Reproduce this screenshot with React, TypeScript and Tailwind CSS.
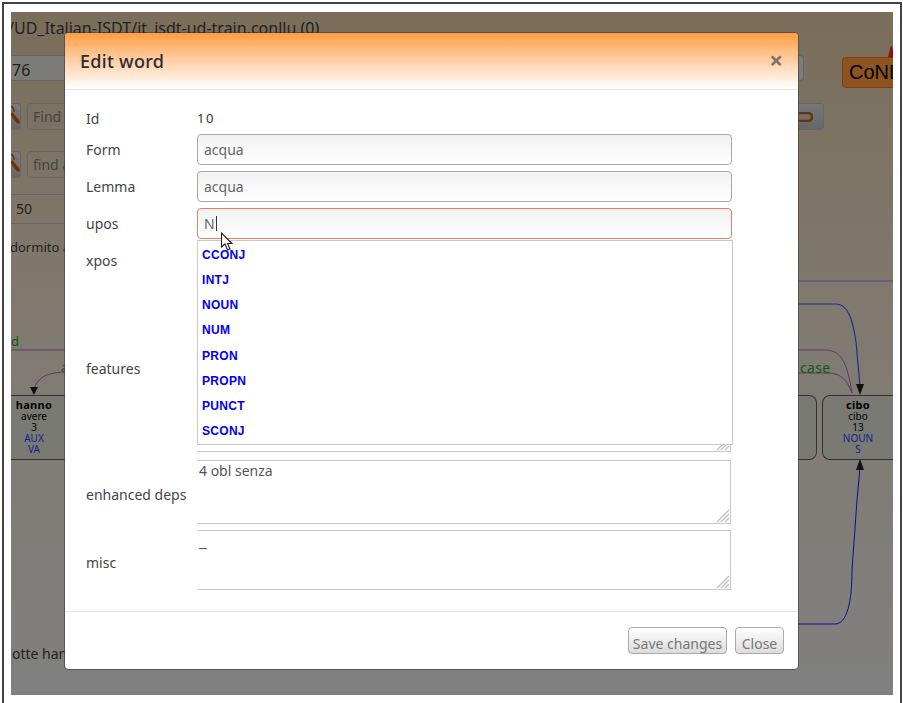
const labelClass = "text-[14px] leading-5 text-[#444]";
const inputClass =
  "h-[31px] w-[535px] rounded-[4px] border border-[#a8a8a8] bg-gradient-to-b from-[#f2f2f2] to-white px-[6px] text-[14px] leading-[29px] text-[#666]";
const textareaClass = "w-[534px] border border-[#c8c8c8] border-l-white px-[1px] text-[14px] leading-5 text-[#555]";

const uposOptions = ["CCONJ", "INTJ", "NOUN", "NUM", "PRON", "PROPN", "PUNCT", "SCONJ"];

const Resizer = () => (
  <svg className="absolute bottom-0 right-0" width="14" height="14" viewBox="0 0 14 14">
    <path d="M1 13 13 1M5 13 13 5M9 13 13 9" stroke="#bdbdbd" strokeWidth="1.2" fill="none" />
  </svg>
);

const SearchIcon = () => (
  <svg width="10" height="25" viewBox="0 0 10 25" className="shrink-0">
    <path d="M0 9 8 19" stroke="#6b3208" strokeWidth="3.5" />
    <path d="M0 2A6 6 0 0 1 3 8" stroke="#6b3208" strokeWidth="1.5" fill="none" />
  </svg>
);

const Node = ({ word, lemma, id, upos, xpos, className }: { word: string; lemma: string; id: string; upos: string; xpos: string; className: string }) => (
  <div className={`absolute flex flex-col items-center border-y border-[#333] bg-[#7a7a74] pt-[3px] text-[10px] leading-[11px] text-black ${className}`}>
    <b className="text-[11px] leading-[12px] tracking-[0.3px]">{word}</b>
    <span>{lemma}</span>
    <span>{id}</span>
    <span className="text-[#1a1a8c]">{upos}</span>
    <span className="text-[#1a1a8c]">{xpos}</span>
  </div>
);

// page behind the dialog, dimmed by the backdrop
const Background = () => (
  <div className="relative h-[683px] w-[882px] overflow-hidden bg-gradient-to-b from-[#7a6e5a] via-[#807b72] to-[#808080] text-[14px] text-[#222]">
    <div className="h-[32px] pt-[6px] text-[16px] leading-5 -ml-[3px] whitespace-nowrap">/UD_Italian-ISDT/it_isdt-ud-train.conllu (0)</div>
    <div className="mt-[11px] flex items-start">
      <div className="h-[26px] w-[793px] shrink-0 rounded-r-[4px] border border-[#666] border-l-0 bg-[#7c7b78] pl-[1px] text-[16px] leading-[29px]">76</div>
      <div className="ml-[38px] mt-[2px] h-[31px] w-[60px] shrink-0 overflow-hidden whitespace-nowrap rounded-l-[4px] border border-[#8a3a10] bg-[#8c5420] pl-[6px] [font-family:'Liberation_Sans',sans-serif] text-[20px] leading-[29px] text-black">
        CoNLL
      </div>
    </div>
    <div className="mt-[15px] flex h-[27px] items-center">
      <div className="flex h-full w-[10px] items-center overflow-hidden rounded-r-[4px] border border-[#666] border-l-0 bg-gradient-to-b from-[#7c7b78] to-[#666]"><SearchIcon /></div>
      <div className="ml-[6px] h-full w-[120px] overflow-hidden whitespace-nowrap rounded-[4px] border border-[#666] pl-[5px] leading-[25px] text-[#444]">Find l</div>
      <div className="ml-[637px] flex h-full w-[40px] items-center justify-end rounded-r-[4px] border border-[#666] border-l-0 bg-gradient-to-b from-[#777] to-[#666] pr-[10px]">
        <svg width="14" height="10" viewBox="0 0 14 10"><path d="M0 1h9a4 4 0 0 1 0 8H0" stroke="#6b3208" strokeWidth="2.5" fill="none" /></svg>
      </div>
    </div>
    <div className="mt-[21px] flex h-[27px] items-center">
      <div className="flex h-full w-[10px] items-center overflow-hidden rounded-r-[4px] border border-[#666] border-l-0 bg-gradient-to-b from-[#7c7b78] to-[#666]"><SearchIcon /></div>
      <div className="ml-[6px] h-full w-[120px] overflow-hidden whitespace-nowrap rounded-[4px] border border-[#666] pl-[5px] leading-[25px] text-[#444]">find a</div>
    </div>
    <div className="mt-[16px] h-[30px] w-[60px] border border-[#666] border-l-0 pl-[5px] leading-[28px]">50</div>
    <div className="mt-[13px] -ml-[1px] whitespace-nowrap text-[13px] leading-5">dormito a</div>

    {/* dependency graph */}
    <svg className="absolute left-0 top-0" width="882" height="683" viewBox="0 0 882 683" fill="none">
      <path d="M700 269H882" stroke="#3a3a8a" strokeWidth="0.8" />
      <path d="M0 338H60" stroke="#5c3a6c" strokeWidth="1.2" />
      <path d="M60 360C40 360 26 362 22 381" stroke="#5c3a6c" strokeWidth="1" />
      <path d="M787 292H825C838 292 842 310 845 330L849 374" stroke="#2a2a90" strokeWidth="1.2" />
      <path d="M787 338H814C830 338 836 350 841 381" stroke="#5c3a6c" strokeWidth="1" />
      <path d="M787 361H816C830 361 836 368 841 381" stroke="#5c3a6c" strokeWidth="1" />
      <path d="M787 612H824C836 612 841 590 841 558L846 488L849 456" stroke="#10108a" strokeWidth="1" />
      <path d="M23 383 19 375H27Z" fill="#111" />
      <path d="M849 383 845 372H853Z" fill="#111" />
      <path d="M849 447 845 458H853Z" fill="#111" />
      <path d="M877 45 880 33 882 38V46Z" fill="#8c1212" />
    </svg>
    <span className="absolute left-0 top-[320px] text-[13px] text-[#0d5a0d]">d</span>
    <span className="absolute left-[50px] top-[346px] text-[13px] text-[#0d5a0d]">a</span>
    <span className="absolute left-[789px] top-[345px] text-[14px] tracking-wide text-[#0d5a0d]">case</span>
    <Node word="hanno" lemma="avere" id="3" upos="AUX" xpos="VA" className="left-0 top-[383px] h-[65px] w-[54px] pr-[8px]" />
    <div className="absolute left-[780px] top-[383px] h-[65px] w-[26px] rounded-r-[8px] border border-l-0 border-[#333] bg-[#7a7a74]" />
    <Node word="cibo" lemma="cibo" id="13" upos="NOUN" xpos="S" className="left-[811px] top-[383px] h-[65px] w-[71px] rounded-l-[8px] border-l" />
    <span className="absolute left-[1px] top-[632px] whitespace-nowrap text-[14px] leading-5">otte hanno</span>
  </div>
);

export default function App() {
  return (
    <div className="relative h-[703px] w-[903px] overflow-hidden bg-white [font-family:'Noto_Sans',sans-serif]">
      <div className="ml-[2px] mt-[2px] h-[703px] w-[900px] border-x-2 border-t-2 border-[#444] pl-[7px] pt-[8px]">
        <Background />
      </div>

      {/* Edit word dialog */}
      <div className="absolute left-[65px] top-[33px] h-[636px] w-[733px] rounded-[4px] bg-white shadow-[0_0_0_1px_rgba(60,60,60,0.6)]">
        <div className="flex h-[57px] items-center justify-between rounded-t-[4px] border-b border-[#e5e5e5] bg-gradient-to-b from-[#ff9d3c] to-white px-[15px]">
          <h4 className="text-[18px] font-medium tracking-[0.3px] text-[#2b2b33]">Edit word</h4>
          <span className="-mt-[3px] text-[24px] font-bold leading-none text-[#7d7468]">×</span>
        </div>

        <div className="relative flex flex-col pl-[21px] pt-[19px]">
          <div className="flex h-[20px] items-center">
            <span className={`${labelClass} w-[111px]`}>Id</span>
            <span className="text-[13px] tracking-[1.5px] text-[#333]">10</span>
          </div>
          <div className="mt-[5px] flex items-center">
            <span className={`${labelClass} w-[111px]`}>Form</span>
            <div className={inputClass}>acqua</div>
          </div>
          <div className="mt-[6px] flex items-center">
            <span className={`${labelClass} w-[111px]`}>Lemma</span>
            <div className={inputClass}>acqua</div>
          </div>
          <div className="mt-[6px] flex items-center">
            <span className={`${labelClass} w-[111px]`}>upos</span>
            <div className={`${inputClass} flex items-center border-[#e8805a]`}>
              N<span className="ml-[1px] h-[15px] w-px bg-[#333]" />
            </div>
          </div>
          <div className="mt-[6px] flex items-center">
            <span className={`${labelClass} w-[111px]`}>xpos</span>
            <div className={inputClass} />
          </div>
          <div className="mt-[6px] flex items-center">
            <span className={`${labelClass} mt-[3px] w-[111px]`}>features</span>
            <div className={`${textareaClass} relative h-[170px]`}><Resizer /></div>
          </div>
          <div className="mt-[8px] flex items-center">
            <span className={`${labelClass} mt-[5px] w-[111px]`}>enhanced deps</span>
            <div className={`${textareaClass} relative h-[64px]`}>4 obl senza<Resizer /></div>
          </div>
          <div className="mt-[6px] flex items-center">
            <span className={`${labelClass} mt-[5px] w-[111px]`}>misc</span>
            <div className={`${textareaClass} relative h-[60px] text-[17px]`}>_<Resizer /></div>
          </div>

          {/* autocomplete list over the xpos and features fields */}
          <ul className="absolute left-[132px] top-[150px] flex h-[205px] w-[536px] flex-col border border-[#c8c8c8] bg-white pl-[4px] pt-[1px] [font-family:'Liberation_Sans',sans-serif]">
            {uposOptions.map((option) => (
              <li key={option} className="flex h-[25.4px] items-center text-[12px] font-bold tracking-[0.3px] text-[#0000ee]">{option}</li>
            ))}
          </ul>
          <svg className="absolute left-[155px] top-[142px]" width="14" height="20" viewBox="0 0 14 20">
            <path d="M1.5 1V15L5 12L7.5 18L10 17L7.5 11.5H12Z" fill="#fff" stroke="#222" strokeWidth="1.1" />
          </svg>
        </div>

        <div className="mt-[21px] flex h-[58px] justify-end gap-[8px] border-t border-[#e5e5e5] pr-[14px] pt-[15px]">
          <div className="flex h-[27px] w-[99px] items-center justify-center rounded-[4px] border border-[#aaa] bg-gradient-to-b from-white to-[#dcdcdc] pt-[5px] text-[14px] text-[#777]">Save changes</div>
          <div className="flex h-[27px] w-[49px] items-center justify-center rounded-[4px] border border-[#aaa] bg-gradient-to-b from-white to-[#dcdcdc] pt-[5px] text-[14px] text-[#777]">Close</div>
        </div>
      </div>
    </div>
  );
}
